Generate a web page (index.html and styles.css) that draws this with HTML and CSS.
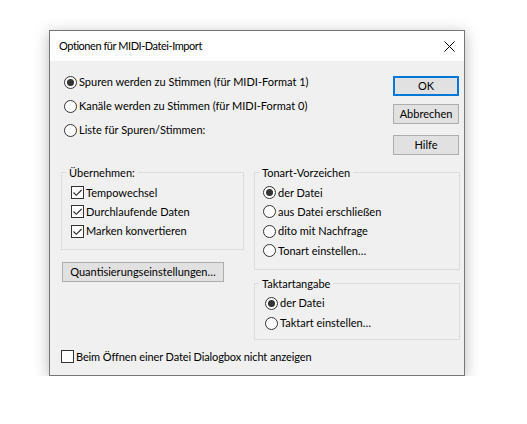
FILE: index.html
```html
<!DOCTYPE html>
<html lang="de">
<head>
<meta charset="utf-8">
<title>Optionen für MIDI-Datei-Import</title>
<link rel="stylesheet" href="styles.css">
</head>
<body>
<div class="dialog">
  <div class="titlebar">
    <span class="title">Optionen für MIDI-Datei-Import</span>
    <svg class="close" width="11" height="11" viewBox="0 0 11 11"><path d="M0.5 0.5 L10.5 10.5 M10.5 0.5 L0.5 10.5" stroke="#000" stroke-width="1" fill="none"/></svg>
  </div>
  <div class="content">
    <div class="top">
      <div class="modes">
        <div class="opt"><span class="radio on"></span><span class="lbl">Spuren werden zu Stimmen (für MIDI-Format 1)</span></div>
        <div class="opt"><span class="radio"></span><span class="lbl">Kanäle werden zu Stimmen (für MIDI-Format 0)</span></div>
        <div class="opt"><span class="radio"></span><span class="lbl">Liste für Spuren/Stimmen:</span></div>
      </div>
      <div class="buttons">
        <button class="btn default">OK</button>
        <button class="btn cancel">Abbrechen</button>
        <button class="btn help">Hilfe</button>
      </div>
    </div>
    <div class="middle">
      <div class="col left">
        <fieldset class="group take">
          <legend>Übernehmen:</legend>
          <div class="row"><span class="check"><svg width="11" height="11" viewBox="0 0 11 11"><path d="M1.5 5.5 L4.3 8.3 L9.6 3" stroke="#222" stroke-width="1.1" fill="none"/></svg></span><span class="lbl">Tempowechsel</span></div>
          <div class="row"><span class="check"><svg width="11" height="11" viewBox="0 0 11 11"><path d="M1.5 5.5 L4.3 8.3 L9.6 3" stroke="#222" stroke-width="1.1" fill="none"/></svg></span><span class="lbl">Durchlaufende Daten</span></div>
          <div class="row"><span class="check"><svg width="11" height="11" viewBox="0 0 11 11"><path d="M1.5 5.5 L4.3 8.3 L9.6 3" stroke="#222" stroke-width="1.1" fill="none"/></svg></span><span class="lbl">Marken konvertieren</span></div>
        </fieldset>
        <button class="btn quant">Quantisierungseinstellungen…</button>
      </div>
      <div class="col right">
        <fieldset class="group key">
          <legend>Tonart-Vorzeichen</legend>
          <div class="row"><span class="radio on"></span><span class="lbl">der Datei</span></div>
          <div class="row"><span class="radio"></span><span class="lbl">aus Datei erschließen</span></div>
          <div class="row"><span class="radio"></span><span class="lbl">dito mit Nachfrage</span></div>
          <div class="row"><span class="radio"></span><span class="lbl">Tonart einstellen…</span></div>
        </fieldset>
        <fieldset class="group meter">
          <legend>Taktartangabe</legend>
          <div class="row"><span class="radio on"></span><span class="lbl">der Datei</span></div>
          <div class="row"><span class="radio"></span><span class="lbl">Taktart einstellen…</span></div>
        </fieldset>
      </div>
    </div>
    <div class="bottom"><span class="check"></span><span class="lbl">Beim Öffnen einer Datei Dialogbox nicht anzeigen</span></div>
  </div>
</div>
</body>
</html>
```

FILE: styles.css
```css
* { box-sizing: border-box; }

html, body {
  margin: 0;
  padding: 0;
  background: #ffffff;
}

body {
  font-family: Lato, "Noto Sans", sans-serif;
  font-size: 11px;
  color: #000;
  padding: 30px 0 0 49px;
}

.dialog {
  width: 416px;
  height: 346px;
  border: 1px solid #767676;
  background: #f0f0f0;
  box-shadow: 0 3px 14px rgba(0, 0, 0, 0.28);
}

.titlebar {
  height: 30px;
  background: #ffffff;
  display: flex;
  align-items: center;
  justify-content: space-between;
  padding: 0 9px 0 9px;
}

.title {
  line-height: 30px;
  letter-spacing: -0.45px;
}

.close {
  display: block;
}

.content {
  height: 314px;
}

.top {
  display: flex;
  justify-content: space-between;
  height: 94px;
}

.modes {
  padding: 9px 0 0 14px;
}

.opt {
  display: flex;
  align-items: center;
  height: 24px;
}

.lbl {
  margin-left: 2px;
  line-height: 16px;
  white-space: nowrap;
}

.radio {
  display: inline-block;
  flex: none;
  width: 13px;
  height: 13px;
  border: 1px solid #333;
  border-radius: 50%;
  background: #fff;
  position: relative;
}

.radio.on::after {
  content: "";
  position: absolute;
  left: 2px;
  top: 2px;
  width: 7px;
  height: 7px;
  border-radius: 50%;
  background: #333;
}

.check {
  display: inline-flex;
  flex: none;
  width: 13px;
  height: 13px;
  border: 1px solid #333;
  background: #fff;
}

.check svg { display: block; }

.buttons {
  display: flex;
  flex-direction: column;
  margin: 15px 5px 0 0;
}

.btn {
  font-family: inherit;
  font-size: 11px;
  color: #000;
  height: 20px;
  width: 66px;
  padding: 0;
  background: #e1e1e1;
  border: 1px solid #adadad;
  line-height: 16px;
  margin: 0;
}

.btn.default {
  border: 2px solid #0078d7;
}

.btn.cancel { margin-top: 8px; }
.btn.help { margin-top: 11px; }

.middle {
  display: flex;
  margin-top: 10px;
  padding-left: 11px;
}

.col {
  display: flex;
  flex-direction: column;
}

.col.left { width: 183px; }
.col.right { width: 206px; margin-left: 10px; }

.group {
  margin: 0;
  border: 1px solid #dcdcdc;
  padding: 3px 0 0 0;
  min-width: 0;
}

.group legend {
  line-height: 15px;
  padding: 0 3px;
  margin-left: 4px;
}

.group .row {
  display: flex;
  align-items: center;
  height: 19.333px;
  padding-left: 9px;
}

.take { height: 85px; }
.key { height: 105px; }
.key .row { padding-left: 8px; }
.meter { height: 64px; margin-top: 6px; padding-top: 2px; }
.meter .row { height: 20px; padding-left: 10px; }

.btn.quant {
  width: 162px;
  margin: 12px 0 0 1px;
}

.bottom {
  display: flex;
  align-items: center;
  height: 19px;
  margin: 7px 0 0 11px;
}

.bottom .lbl { letter-spacing: -0.12px; }
```
